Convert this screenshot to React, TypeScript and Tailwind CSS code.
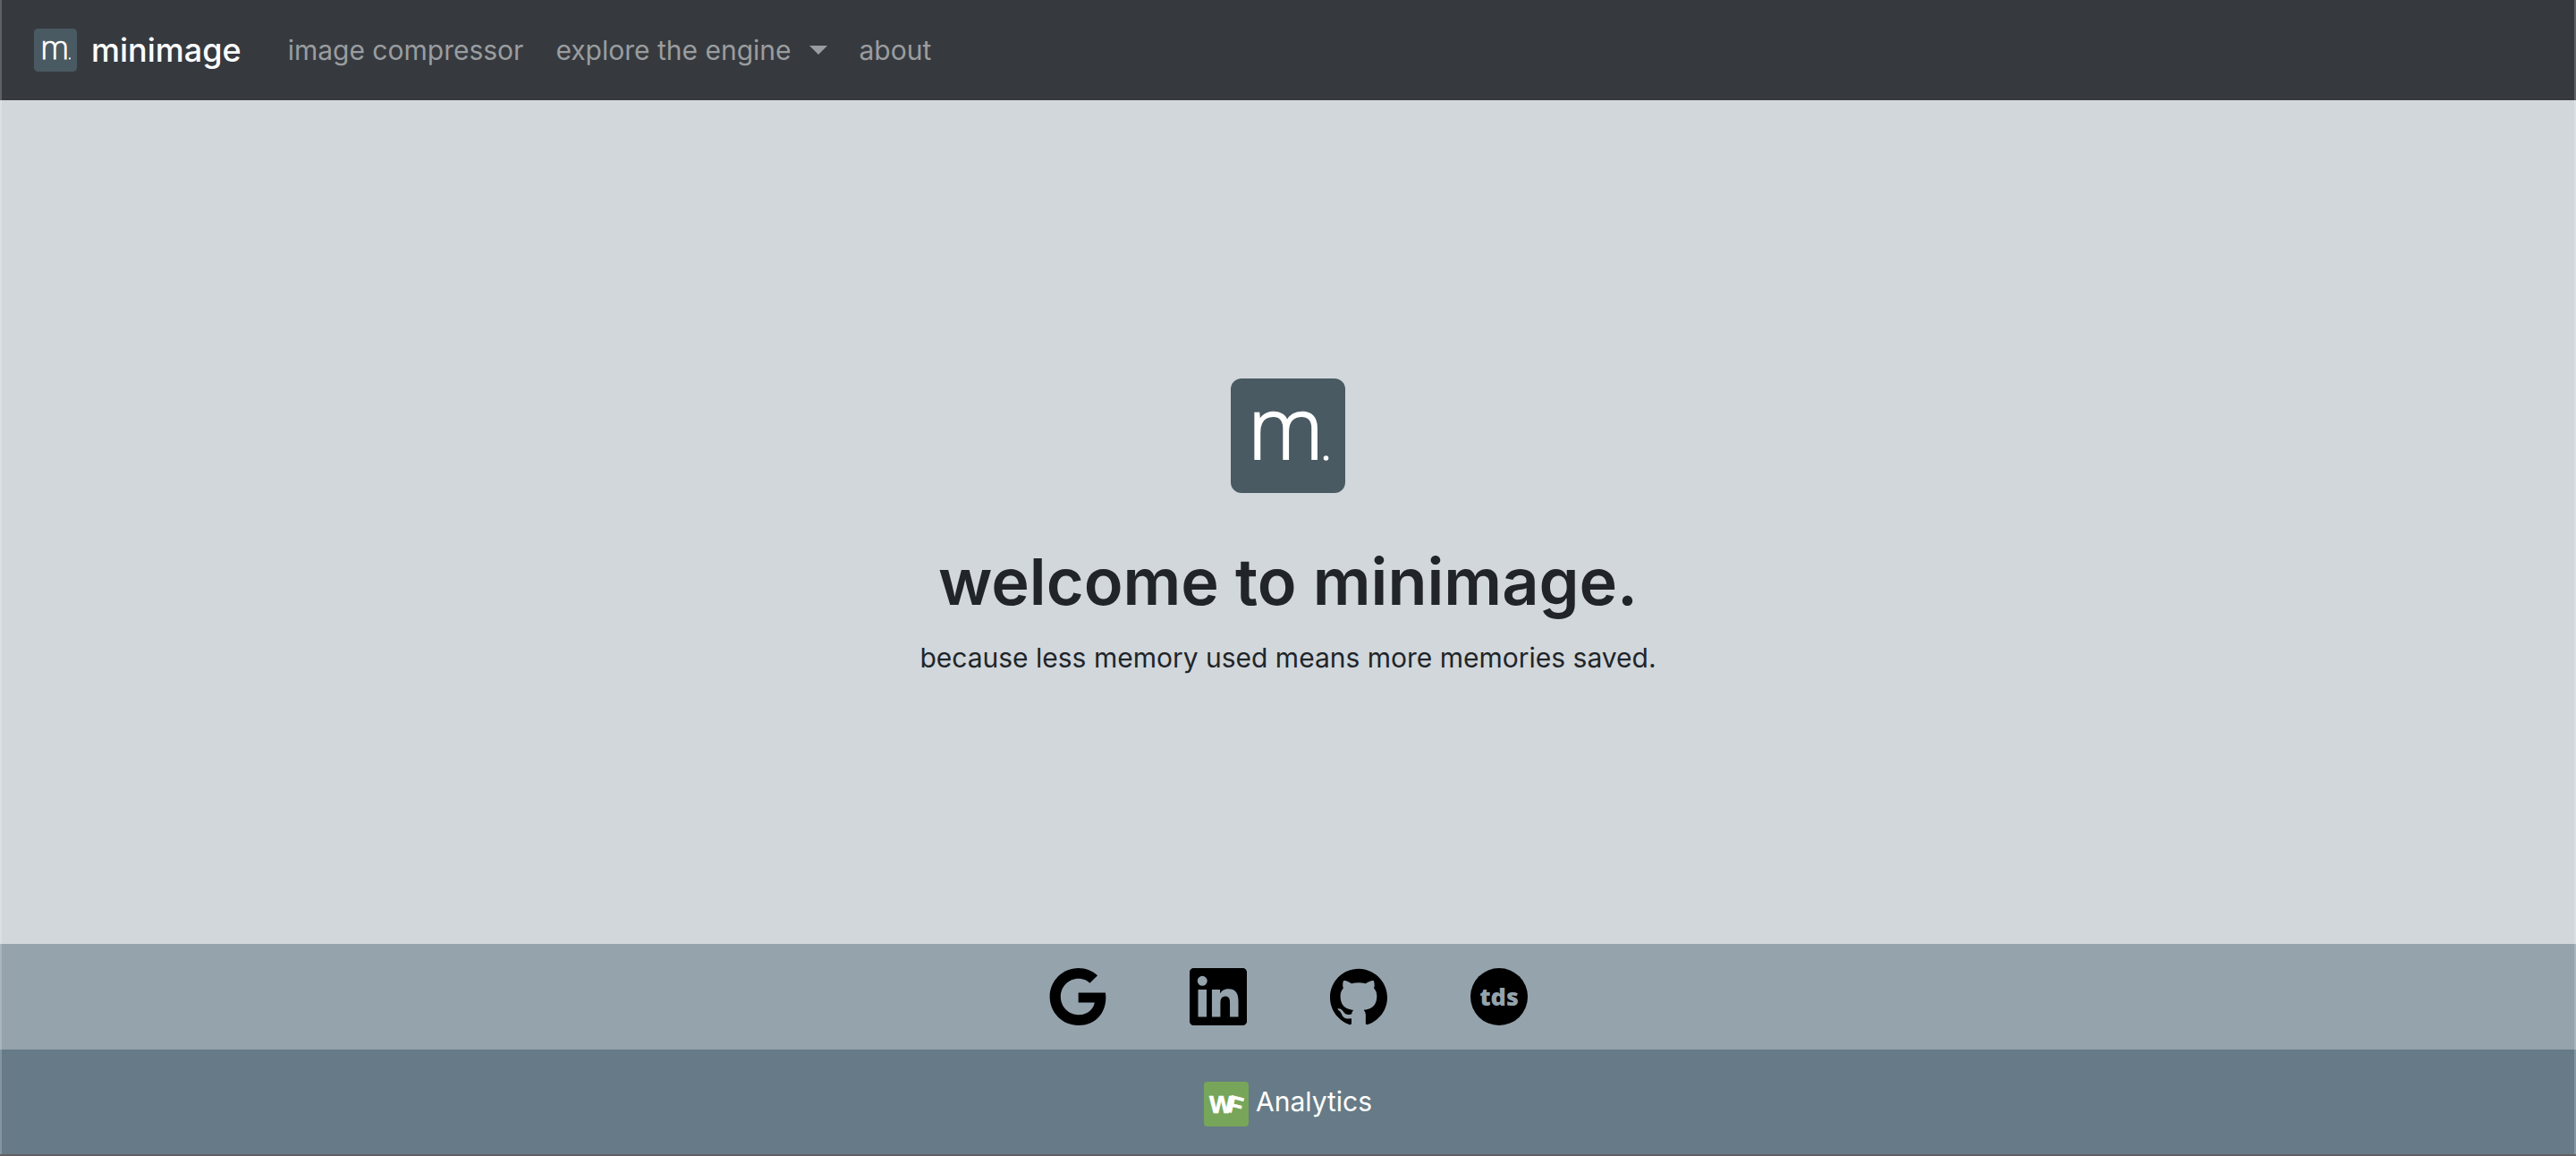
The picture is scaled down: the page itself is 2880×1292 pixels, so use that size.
import type { ReactNode } from 'react';

function MinimageLogo({ className }: { className: string }) {
  return (
    <svg viewBox="0 0 128 128" className={className} aria-hidden="true">
      <rect width="128" height="128" rx="12" fill="#4a5a62" />
      <text x="19" y="90" fill="#fff" stroke="#fff" strokeWidth="2" fontSize="96" fontWeight="300" fontFamily="Open Sans, sans-serif">
        m
      </text>
      <circle cx="106.500" cy="89" r="2.800" fill="#fff" />
    </svg>
  );
}

function GoogleIcon() {
  return (
    <svg viewBox="0 0 24 24" className="size-16" fill="currentColor" aria-hidden="true">
      <path d="M12.24 10.285V14.4h6.806c-.275 1.765-2.056 5.174-6.806 5.174-4.095 0-7.439-3.389-7.439-7.574s3.345-7.574 7.439-7.574c2.33 0 3.891.989 4.785 1.849l3.254-3.138C18.189 1.186 15.479 0 12.24 0c-6.635 0-12 5.365-12 12s5.365 12 12 12c6.926 0 11.52-4.869 11.52-11.726 0-.788-.085-1.39-.189-1.989H12.24z" />
    </svg>
  );
}

function LinkedInIcon() {
  return (
    <svg viewBox="0 0 24 24" className="size-16" fill="currentColor" aria-hidden="true">
      <path d="M20.447 20.452h-3.554v-5.569c0-1.328-.027-3.037-1.852-3.037-1.853 0-2.136 1.445-2.136 2.939v5.667H9.351V9h3.414v1.561h.046c.477-.9 1.637-1.85 3.37-1.85 3.601 0 4.267 2.37 4.267 5.455v6.286zM5.337 7.433a2.062 2.062 0 0 1-2.063-2.065 2.064 2.064 0 1 1 2.063 2.065zm1.782 13.019H3.555V9h3.564v11.452zM22.225 0H1.771C.792 0 0 .774 0 1.729v20.542C0 23.227.792 24 1.771 24h20.451C23.2 24 24 23.227 24 22.271V1.729C24 .774 23.2 0 22.222 0h.003z" />
    </svg>
  );
}

function GitHubIcon() {
  return (
    <svg viewBox="0 0 24 24" className="size-16" fill="currentColor" aria-hidden="true">
      <path d="M12 .297c-6.63 0-12 5.373-12 12 0 5.303 3.438 9.8 8.205 11.385.6.113.82-.258.82-.577 0-.285-.01-1.04-.015-2.04-3.338.724-4.042-1.61-4.042-1.61C4.422 18.07 3.633 17.7 3.633 17.7c-1.087-.744.084-.729.084-.729 1.205.084 1.838 1.236 1.838 1.236 1.07 1.835 2.809 1.305 3.495.998.108-.776.417-1.305.76-1.605-2.665-.3-5.466-1.332-5.466-5.93 0-1.31.465-2.38 1.235-3.22-.135-.303-.54-1.523.105-3.176 0 0 1.005-.322 3.3 1.23.96-.267 1.98-.399 3-.405 1.02.006 2.04.138 3 .405 2.28-1.552 3.285-1.23 3.285-1.23.645 1.653.24 2.873.12 3.176.765.84 1.23 1.91 1.23 3.22 0 4.61-2.805 5.625-5.475 5.92.42.36.81 1.096.81 2.22 0 1.606-.015 2.896-.015 3.286 0 .315.21.69.825.57C20.565 22.092 24 17.592 24 12.297c0-6.627-5.373-12-12-12" />
    </svg>
  );
}

function TdsIcon() {
  return (
    <svg viewBox="0 0 64 64" className="size-16" aria-hidden="true">
      <circle cx="32" cy="32" r="32" fill="currentColor" />
      <text x="32" y="42" textAnchor="middle" fill="#95a3ad" fontSize="27" fontWeight="800" fontFamily="Open Sans, sans-serif">
        tds
      </text>
    </svg>
  );
}

function WfIcon() {
  return (
    <svg viewBox="0 0 50 50" className="size-[50px]" aria-hidden="true">
      <rect width="50" height="50" rx="4" fill="#77a65a" />
      <g fill="#fff" stroke="#fff" strokeWidth="0.7" fontFamily="Liberation Sans, sans-serif" fontWeight="700">
        <text x="6" y="35" fontSize="28">W</text>
        <text x="25" y="33" fontSize="27" transform="rotate(14 25 33)">F</text>
      </g>
    </svg>
  );
}

function SocialLink({ label, children }: { label: string; children: ReactNode }) {
  return (
    <a href="#" aria-label={label} className="text-black">
      {children}
    </a>
  );
}

export default function App() {
  return (
    <div className="relative flex min-h-screen flex-col border-b-2 border-[#635f65] bg-[#d1d7db] font-[Inter,sans-serif] text-3xl text-[#212529]">
      <nav className="flex h-28 items-center bg-[#363a3f] px-[38px]">
        <a href="#" className="flex items-center gap-4 text-4xl font-medium text-white">
          <MinimageLogo className="size-12 overflow-visible" />
          minimage
        </a>
        <div className="ml-13 flex items-center gap-9 text-[#9a9d9f]">
          <a href="#">image compressor</a>
          <button type="button" className="flex items-center gap-5">
            explore the engine
            <svg viewBox="0 0 20 10" className="h-[10px] w-5" fill="currentColor" aria-hidden="true">
              <path d="M0 0h20L10 10z" />
            </svg>
          </button>
          <a href="#">about</a>
        </div>
      </nav>
      <main className="flex flex-1 flex-col items-center justify-center pt-2 text-center">
        <MinimageLogo className="size-32 overflow-visible" />
        <h1 className="mt-14 text-7xl leading-[86px] font-semibold">welcome to minimage.</h1>
        <p className="mt-6">because less memory used means more memories saved.</p>
      </main>
      <footer>
        <div className="flex h-[118px] items-center justify-center gap-[93px] bg-[#95a3ad]">
          <SocialLink label="Google"><GoogleIcon /></SocialLink>
          <SocialLink label="LinkedIn"><LinkedInIcon /></SocialLink>
          <SocialLink label="GitHub"><GitHubIcon /></SocialLink>
          <SocialLink label="Towards Data Science"><TdsIcon /></SocialLink>
        </div>
        <div className="flex h-[117px] items-center justify-center bg-[#667b87] pt-1">
          <a href="#" className="flex items-start gap-2 leading-11 text-white">
            <WfIcon />
            Analytics
          </a>
        </div>
      </footer>
      <div className="pointer-events-none absolute inset-0 border-x-2 border-white/20" />
    </div>
  );
}
